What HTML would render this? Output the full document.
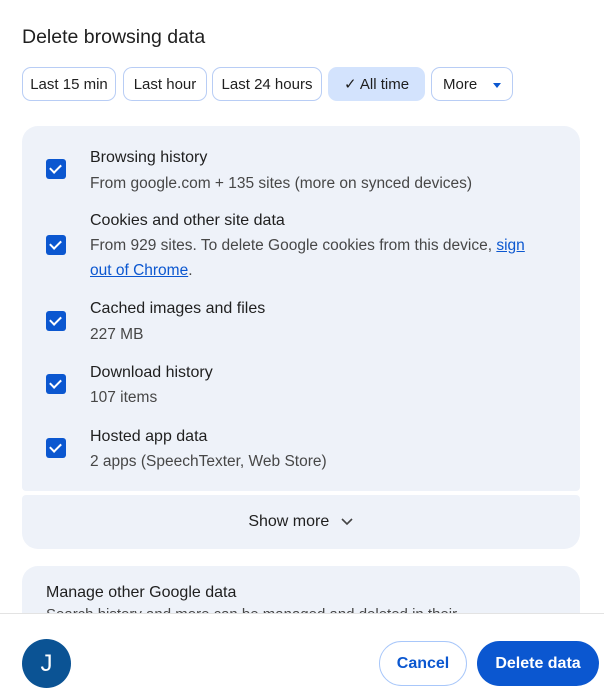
<!DOCTYPE html><html><head><style>
*{box-sizing:border-box;margin:0;padding:0}
body{width:604px;height:694px;overflow:hidden;background:#fff;font-family:"Liberation Sans",sans-serif;color:#1f1f1f;position:relative}
.abs{position:absolute}
.chip{position:absolute;top:67px;height:34px;border:1px solid #b8cdf5;border-radius:9px;font-size:15px;line-height:34px;text-align:center;color:#1f1f1f}
.card{position:absolute;left:22px;width:558px;background:#eef2f9}
.cb{position:absolute;left:46px;width:20px;height:20px;background:#0b57d0;border-radius:3px}
.cb::after{content:"";position:absolute;left:6px;top:3px;width:5px;height:9px;border:solid #fff;border-width:0 2px 2px 0;transform:rotate(45deg)}
.t{position:absolute;left:90px;font-size:16px;color:#1f1f1f}
.s{position:absolute;left:90px;font-size:15.5px;color:#474747;line-height:25px}
</style></head><body>
<div class="abs" style="left:22px;top:26px;font-size:19.5px">Delete browsing data</div>
<div class="chip" style="left:22px;width:94px">Last 15 min</div>
<div class="chip" style="left:123px;width:84px">Last hour</div>
<div class="chip" style="left:212px;width:110px">Last 24 hours</div>
<div class="chip" style="left:328px;width:97px;background:#d3e3fd;border-color:#d3e3fd">✓ All time</div>
<div class="chip" style="left:431px;width:82px;text-align:left;padding-left:11px">More <span style="display:inline-block;margin-left:12px;border-left:4px solid transparent;border-right:4px solid transparent;border-top:5px solid #0b57d0;vertical-align:middle"></span></div>
<div class="card" style="top:126px;height:365px;border-radius:16px 16px 4px 4px"></div>
<div class="card" style="top:495px;height:54px;border-radius:4px 4px 16px 16px;text-align:center;font-size:16px;line-height:54px">Show more <svg width="14" height="10" style="margin-left:6px" viewBox="0 0 14 10"><path d="M2 3l5 5 5-5" fill="none" stroke="#444" stroke-width="1.6"/></svg></div>
<div class="card" style="top:566px;height:60px;border-radius:16px 16px 0 0"></div>
<div class="abs" style="left:46px;top:584px;font-size:16px">Manage other Google data</div>
<div class="abs" style="left:46px;top:606px;font-size:15px;color:#474747">Search history and more can be managed and deleted in their</div>
<div class="cb" style="top:159px"></div><div class="cb" style="top:235px"></div><div class="cb" style="top:311px"></div><div class="cb" style="top:374px"></div><div class="cb" style="top:438px"></div>
<div class="t" style="top:149px">Browsing history</div>
<div class="s" style="top:171px">From google.com + 135 sites (more on synced devices)</div>
<div class="t" style="top:212px">Cookies and other site data</div>
<div class="s" style="top:233px;width:460px">From 929 sites. To delete Google cookies from this device, <span style="color:#0b57d0;text-decoration:underline">sign out of Chrome</span>.</div>
<div class="t" style="top:300px">Cached images and files</div>
<div class="s" style="top:322px">227 MB</div>
<div class="t" style="top:364px">Download history</div>
<div class="s" style="top:385px">107 items</div>
<div class="t" style="top:428px">Hosted app data</div>
<div class="s" style="top:449px">2 apps (SpeechTexter, Web Store)</div>
<div class="abs" style="left:0;top:613px;width:604px;height:81px;background:#fff;border-top:1px solid #e3e3e3"></div>
<div class="abs" style="left:22px;top:639px;width:49px;height:49px;border-radius:50%;background:#0b5394;color:#fff;font-size:24px;line-height:49px;text-align:center">J</div>
<div class="abs" style="left:379px;top:641px;width:88px;height:45px;border:1px solid #a8c7fa;border-radius:23px;color:#0b57d0;font-size:16px;line-height:43px;text-align:center;font-weight:bold">Cancel</div>
<div class="abs" style="left:477px;top:641px;width:122px;height:45px;background:#0b57d0;border-radius:23px;color:#fff;font-size:16px;line-height:45px;text-align:center;font-weight:bold">Delete data</div>
</body></html>
